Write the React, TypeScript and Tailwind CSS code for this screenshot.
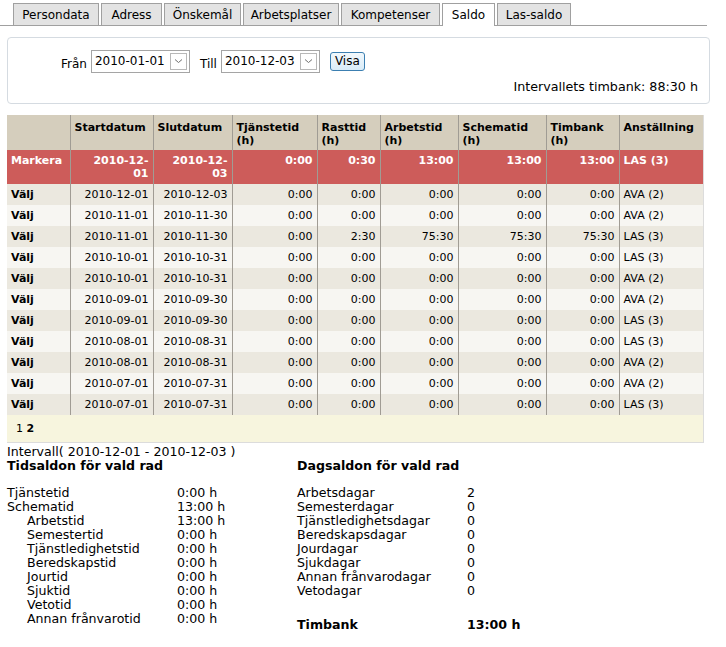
import React from 'react';

const tabs: [string, string][] = [
  ['Persondata', 'w-[86px]'],
  ['Adress', 'w-[61px]'],
  ['Önskemål', 'w-[77px]'],
  ['Arbetsplatser', 'w-[96px]'],
  ['Kompetenser', 'w-[99px]'],
  ['Saldo', 'w-[53px]'],
  ['Las-saldo', 'w-[74px]'],
];

interface SaldoRow {
  start: string;
  end: string;
  tjanst: string;
  rast: string;
  arbete: string;
  schema: string;
  timbank: string;
  anst: string;
}

const z = '0:00';
const rows: SaldoRow[] = [
  { start: '2010-12-01', end: '2010-12-03', tjanst: z, rast: z, arbete: z, schema: z, timbank: z, anst: 'AVA (2)' },
  { start: '2010-11-01', end: '2010-11-30', tjanst: z, rast: z, arbete: z, schema: z, timbank: z, anst: 'AVA (2)' },
  { start: '2010-11-01', end: '2010-11-30', tjanst: z, rast: '2:30', arbete: '75:30', schema: '75:30', timbank: '75:30', anst: 'LAS (3)' },
  { start: '2010-10-01', end: '2010-10-31', tjanst: z, rast: z, arbete: z, schema: z, timbank: z, anst: 'LAS (3)' },
  { start: '2010-10-01', end: '2010-10-31', tjanst: z, rast: z, arbete: z, schema: z, timbank: z, anst: 'AVA (2)' },
  { start: '2010-09-01', end: '2010-09-30', tjanst: z, rast: z, arbete: z, schema: z, timbank: z, anst: 'AVA (2)' },
  { start: '2010-09-01', end: '2010-09-30', tjanst: z, rast: z, arbete: z, schema: z, timbank: z, anst: 'LAS (3)' },
  { start: '2010-08-01', end: '2010-08-31', tjanst: z, rast: z, arbete: z, schema: z, timbank: z, anst: 'LAS (3)' },
  { start: '2010-08-01', end: '2010-08-31', tjanst: z, rast: z, arbete: z, schema: z, timbank: z, anst: 'AVA (2)' },
  { start: '2010-07-01', end: '2010-07-31', tjanst: z, rast: z, arbete: z, schema: z, timbank: z, anst: 'AVA (2)' },
  { start: '2010-07-01', end: '2010-07-31', tjanst: z, rast: z, arbete: z, schema: z, timbank: z, anst: 'LAS (3)' },
];

const tidsaldon: [string, string, boolean][] = [
  ['Tjänstetid', '0:00 h', false],
  ['Schematid', '13:00 h', false],
  ['Arbetstid', '13:00 h', true],
  ['Semestertid', '0:00 h', true],
  ['Tjänstledighetstid', '0:00 h', true],
  ['Beredskapstid', '0:00 h', true],
  ['Jourtid', '0:00 h', true],
  ['Sjuktid', '0:00 h', true],
  ['Vetotid', '0:00 h', true],
  ['Annan frånvarotid', '0:00 h', true],
];

const dagsaldon: [string, string][] = [
  ['Arbetsdagar', '2'],
  ['Semesterdagar', '0'],
  ['Tjänstledighetsdagar', '0'],
  ['Beredskapsdagar', '0'],
  ['Jourdagar', '0'],
  ['Sjukdagar', '0'],
  ['Annan frånvarodagar', '0'],
  ['Vetodagar', '0'],
];

const DateSelect: React.FC<{ value: string }> = ({ value }) => (
  <div className="flex h-[23px] w-[99px] items-center border border-[#a5a5a5] bg-white pl-[3px]">
    <span className="flex-1 text-[12px]">{value}</span>
    <span className="mr-[2px] flex h-[17px] w-[17px] items-center justify-center border border-[#b8b8b8] bg-white">
      <svg width="9" height="6" viewBox="0 0 9 6">
        <path d="M1 1.5 L4.5 4.5 L8 1.5" fill="none" stroke="#707070" strokeWidth="1" />
      </svg>
    </span>
  </div>
);

const cell = 'border-l border-[#a09c94] px-[4px] first:border-l-0';

export default function App() {
  return (
    <div className="w-[726px] h-[647px] bg-white text-black overflow-hidden" style={{ fontFamily: '"DejaVu Sans", Verdana, sans-serif' }}>
      {/* tabs */}
      <div className="flex items-end pl-[13px] pt-[3px] border-b border-[#a0a0a0] w-[707px] h-[26px]">
        {tabs.map(([t, w]) => (
          <div
            key={t}
            className={`${w} mr-[2px] border border-b-0 border-[#a0a0a0] text-center text-[12px] ${t === 'Saldo' ? 'bg-white h-[23px] -mb-px leading-[23px]' : 'h-[22px] bg-[#e3e3e3] leading-[22px]'}`}
          >
            {t}
          </div>
        ))}
      </div>

      {/* filter */}
      <div className="mx-[7px] mt-[11px] h-[67px] w-[703px] rounded-[4px] border border-[#d5dbe1] px-[11px]">
        <div className="flex items-center pt-[11px] pl-[42px] text-[12px]">
          <span className="mr-[4px] mt-[6px]">Från</span>
          <DateSelect value="2010-01-01" />
          <span className="ml-[10px] mr-[4px] mt-[6px]">Till</span>
          <DateSelect value="2010-12-03" />
          <button className="ml-[10px] h-[19px] rounded-[3px] border border-[#3c7fb1] bg-gradient-to-b from-[#f2f8fc] to-[#d9ecf8] px-[4px] text-[12px] leading-[16px]">
            Visa
          </button>
        </div>
        <div className="mt-[6px] text-right text-[12.7px] leading-[16px]">Intervallets timbank: 88:30 h</div>
      </div>

      {/* table */}
      <div className="mx-[7px] mt-[11px] w-[697px] border-r border-b border-[#dcdcdc]">
        <table className="w-full table-fixed border-collapse text-[11px] leading-[13px]">
          <colgroup>
            <col className="w-[63px]" />
            <col className="w-[83px]" />
            <col className="w-[79px]" />
            <col className="w-[85px]" />
            <col className="w-[63px]" />
            <col className="w-[78px]" />
            <col className="w-[88px]" />
            <col className="w-[73px]" />
            <col />
          </colgroup>
          <thead>
            <tr className="h-[35px] bg-[#d5cebd] align-top font-bold">
              <th className={`${cell} pt-[6px] text-left`}></th>
              <th className={`${cell} pt-[6px] text-left`}>Startdatum</th>
              <th className={`${cell} pt-[6px] text-left`}>Slutdatum</th>
              <th className={`${cell} pt-[6px] text-left`}>Tjänstetid (h)</th>
              <th className={`${cell} pt-[6px] text-left`}>Rasttid (h)</th>
              <th className={`${cell} pt-[6px] text-left`}>Arbetstid (h)</th>
              <th className={`${cell} pt-[6px] text-left`}>Schematid (h)</th>
              <th className={`${cell} pt-[6px] text-left`}>Timbank (h)</th>
              <th className={`${cell} pt-[6px] text-left`}>Anställning</th>
            </tr>
          </thead>
          <tbody>
            <tr className="h-[34px] bg-[#cd5c5a] align-top font-bold text-white">
              <td className={`${cell} pt-[4px] text-left`}>Markera</td>
              <td className={`${cell} pt-[4px] text-right`}>2010-12-<br />01</td>
              <td className={`${cell} pt-[4px] text-right`}>2010-12-<br />03</td>
              <td className={`${cell} pt-[4px] text-right`}>0:00</td>
              <td className={`${cell} pt-[4px] text-right`}>0:30</td>
              <td className={`${cell} pt-[4px] text-right`}>13:00</td>
              <td className={`${cell} pt-[4px] text-right`}>13:00</td>
              <td className={`${cell} pt-[4px] text-right`}>13:00</td>
              <td className={`${cell} pt-[4px] text-left`}>LAS (3)</td>
            </tr>
            {rows.map((r, i) => (
              <tr key={i} className={`h-[21px] ${i % 2 === 0 ? 'bg-[#ebe8df]' : 'bg-[#f7f6f2]'}`}>
                <td className={`${cell} font-bold`}>Välj</td>
                <td className={`${cell} text-right`}>{r.start}</td>
                <td className={`${cell} text-right`}>{r.end}</td>
                <td className={`${cell} text-right`}>{r.tjanst}</td>
                <td className={`${cell} text-right`}>{r.rast}</td>
                <td className={`${cell} text-right`}>{r.arbete}</td>
                <td className={`${cell} text-right`}>{r.schema}</td>
                <td className={`${cell} text-right`}>{r.timbank}</td>
                <td className={cell}>{r.anst}</td>
              </tr>
            ))}
            <tr className="h-[27px] bg-[#f7f5de]">
              <td colSpan={9} className="px-[9px] text-[11px]">
                <span>1</span> <span className="font-bold">2</span>
              </td>
            </tr>
          </tbody>
        </table>
      </div>

      {/* summary */}
      <div className="px-[7px] text-[12.6px] leading-[14px]">
        <div className="pt-[2px]">Intervall( 2010-12-01 - 2010-12-03 )</div>
        <div className="flex">
          <div className="w-[290px]">
            <div className="font-bold">Tidsaldon för vald rad</div>
            <div className="mt-[13px]">
              {tidsaldon.map(([l, v, ind]) => (
                <div key={l} className="flex">
                  <span className={`w-[170px] ${ind ? 'pl-[20px]' : ''}`}>{l}</span>
                  <span>{v}</span>
                </div>
              ))}
            </div>
          </div>
          <div>
            <div className="font-bold">Dagsaldon för vald rad</div>
            <div className="mt-[13px]">
              {dagsaldon.map(([l, v]) => (
                <div key={l} className="flex">
                  <span className="w-[170px]">{l}</span>
                  <span>{v}</span>
                </div>
              ))}
            </div>
            <div className="mt-[20px] flex font-bold">
              <span className="w-[170px]">Timbank</span>
              <span>13:00 h</span>
            </div>
          </div>
        </div>
      </div>
    </div>
  );
}
